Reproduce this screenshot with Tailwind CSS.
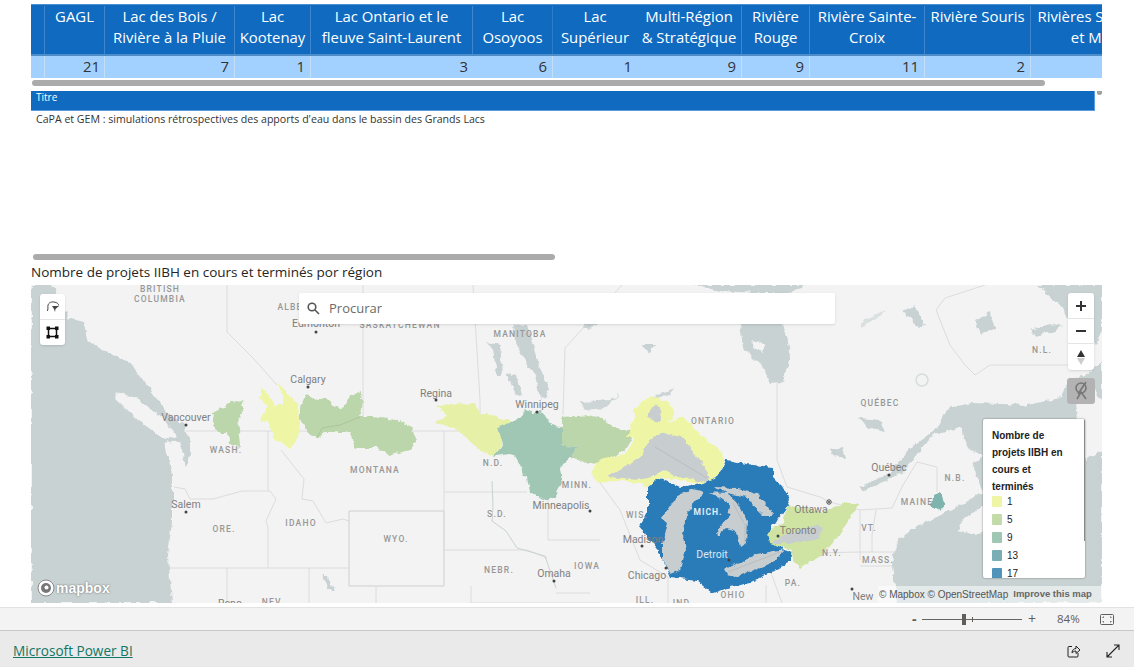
<!DOCTYPE html>
<html lang="fr">
<head>
<meta charset="UTF-8">
<title>Microsoft Power BI</title>
<script src="https://cdn.jsdelivr.net/npm/@tailwindcss/browser@4"></script>
</head>
<body class="bg-white h-[667px] w-[1134px] overflow-hidden flex flex-col font-['Open_Sans',sans-serif]">
  <div class="h-[607px] pl-[31px] pr-[32px] pt-[4px] flex flex-col">
    <!-- table -->
    <div class="w-[1071px] overflow-hidden text-[14.9px]">
      <div class="grid grid-cols-[14px_60px_130px_76px_162px_80px_84px_105px_68px_115px_106px_140px] h-[52px] bg-[#0f6ac0] text-white text-center leading-[21px] border-t border-[#4d8fd0] border-b-2 border-b-[#4f8dc8] pt-px whitespace-nowrap">
        <div class="border-r border-[#3f86cc]"></div>
        <div class="border-r border-[#3f86cc]">GAGL</div>
        <div class="border-r border-[#3f86cc]">Lac des Bois /<br>Rivière à la Pluie</div>
        <div class="border-r border-[#3f86cc]">Lac<br>Kootenay</div>
        <div class="border-r border-[#3f86cc]">Lac Ontario et le<br>fleuve Saint-Laurent</div>
        <div class="border-r border-[#2f7cc6]">Lac<br>Osoyoos</div>
        <div>Lac<br>Supérieur</div>
        <div class="border-r border-[#3f86cc]">Multi-Région<br>&amp; Stratégique</div>
        <div class="border-r border-[#3f86cc]">Rivière<br>Rouge</div>
        <div class="border-r border-[#3f86cc]">Rivière Sainte-<br>Croix</div>
        <div class="border-r border-[#3f86cc]">Rivière Souris</div>
        <div class="overflow-hidden">Rivières Saint-Jean<br>et Maine</div>
      </div>
      <div class="grid grid-cols-[14px_60px_130px_76px_162px_80px_84px_105px_68px_115px_106px_140px] h-[22px] bg-[#a3d1ff] text-[#333] text-right leading-[21px]">
        <div class="border-r border-[#c4dff5]"></div>
        <div class="border-r border-[#c4dff5] pr-[4px]">21</div>
        <div class="border-r border-[#c4dff5] pr-[5px]">7</div>
        <div class="border-r border-[#c4dff5] pr-[5px]">1</div>
        <div class="pr-[5px]">3</div>
        <div class="border-r border-[#c4dff5] pr-[5px]">6</div>
        <div class="pr-[5px]">1</div>
        <div class="border-r border-[#c4dff5] pr-[5px]">9</div>
        <div class="border-r border-[#c4dff5] pr-[5px]">9</div>
        <div class="border-r border-[#c4dff5] pr-[5px]">11</div>
        <div class="border-r border-[#c4dff5] pr-[5px]">2</div>
        <div></div>
      </div>
    </div>
    <div class="mt-[2px] ml-px w-[1013px] h-[6px] rounded-full bg-[#ababab]"></div>

    <!-- titre -->
    <div class="mt-[5px] flex items-start">
      <div class="w-[1064px] h-[20px] bg-[#0f6ac0] border-b border-r border-[#5b9be0] text-white text-[10px] leading-[13px] pl-[5px]">Titre</div>
      <div class="ml-[2px] w-[5px] h-[4px] rounded-b-full bg-[#a0a0a0]"></div>
    </div>
    <div class="pl-[5px] mt-[1px] text-[10.600px] leading-[14px] text-[#333] whitespace-nowrap">CaPA et GEM : simulations rétrospectives des apports d'eau dans le bassin des Grands Lacs</div>

    <div class="mt-[128px] ml-[2px] w-[522px] h-[6px] rounded-full bg-[#ababab]"></div>
    <div class="mt-[3px] h-[19px] text-[13.500px] leading-[18px] text-[#252423] whitespace-nowrap">Nombre de projets IIBH en cours et terminés por région</div>

    <!-- map -->
    <div class="relative mt-[3px] w-[1071px] h-[318px] overflow-hidden bg-[#f3f3f3]">
      <svg class="absolute inset-0" width="1071" height="318" viewBox="31 285 1071 318" font-family="Roboto, sans-serif">
        <defs>
          <filter id="rough" x="0" y="0" width="100%" height="100%">
            <feTurbulence type="fractalNoise" baseFrequency="0.14" numOctaves="3" seed="4"/>
            <feDisplacementMap in="SourceGraphic" scale="6" xChannelSelector="R" yChannelSelector="G"/>
            <feGaussianBlur stdDeviation="0.35"/>
          </filter>
          <filter id="soft"><feGaussianBlur stdDeviation="0.4"/></filter>
        </defs>
        <!-- water -->
        <g fill="#c9d2d3" filter="url(#rough)">
          <polygon points="31,285 50,285 62,300 68,318 84,322 87,340 105,352 130,362 150,390 167,412 183,425 186,440 165,443 172,474 172,521 168,555 172,603 31,603"/>
          <polygon points="1037,285 1102,285 1102,330 1095,345 1068,320 1060,305"/>
          <polygon points="860,488 890,472 910,448 937,428 947,408 973,403 1027,405 1060,398 1068,382 1085,375 1102,362 1102,603 897,603 892,565 893,555 900,538 920,525 947,512 983,492 973,465 983,455 970,450 960,427 933,435 903,472 862,492"/>
          <polygon points="693,285 806,285 790,293 760,293 720,291"/>
          <polygon points="740,323 783,323 790,357 783,382 770,383 763,368 743,348"/>
          <polygon points="513,323 527,325 540,368 548,385 547,400 540,398 535,375 527,365 515,342"/>
          <polygon points="487,342 500,345 503,375 497,375 493,350"/>
          <polygon points="505,372 517,375 522,395 515,392"/>
          <polygon points="183,425 190,437 190,455 186,468 183,455 180,440"/>
          <polygon points="903,312 915,306 925,325 918,328 910,318"/>
          <polygon points="975,320 990,312 995,330 980,335"/>
          <polygon points="1030,330 1050,324 1062,327 1048,333 1035,336"/>
          <polygon points="322,573 328,578 336,590 328,590"/>
          <polygon points="860,322 885,310 880,316 862,328" opacity="0.6"/>
          <polygon points="655,395 675,388 668,395 650,400" opacity="0.9"/>
          <polygon points="580,402 610,400 620,395 605,408 585,410" opacity="0.9"/>
          <polygon points="585,323 600,321 597,327 585,328"/>
          <polygon points="640,345 655,345 650,352"/>
          <polygon points="860,418 880,420 885,432 868,428"/>
          <polygon points="830,450 842,447 845,458 833,456"/>
        </g>
        <g fill="#f3f3f3" filter="url(#rough)">
          <polygon points="117,392 135,398 163,418 176,436 165,440 138,420 115,398"/>
          <polygon points="958,530 962,520 985,505 1000,490 1000,520 975,535"/>
          <polygon points="1075,405 1090,385 1102,400 1102,450 1085,460"/>
          <polygon points="753,340 765,345 762,352 752,347"/>
        </g>
        <circle cx="922" cy="380" r="6" fill="none" stroke="#d5dcdd" stroke-width="1.500" filter="url(#soft)"/>
        <!-- borders -->
        <g fill="none" stroke="#dcdcdc" stroke-width="1">
          <path d="M186,431 H600"/>
          <path d="M227,285 V332 L253,358 L277,385"/>
          <path d="M363,285 V431"/>
          <path d="M473,285 L480,400 V431"/>
          <path d="M622,285 L565,348 L563,415"/>
          <path d="M777,382 V460 L787,487 L820,497 L830,502 L860,510"/>
          <path d="M268,431 V491 M174,487 L185,489 L190,499 L213,499 L242,491 H270 L276,499 L266,521 L268,528 V568"/>
          <path d="M170,568 H349"/>
          <path d="M281,450 L304,479 L302,499 L313,501 L326,523 L343,519 L349,521"/>
          <path d="M349,511 H444 V586 H349 Z" stroke="#cfcfcf"/>
          <path d="M444,431 V550 L527,550 L547,558 M444,492 H527"/>
          <path d="M548,494 V540 H600 M376,586 V603 M471,586 V603 M227,568 V603 M309,568 V603 M471,603 H600 M556,593 H590"/>
          <path d="M600,448 L598,480 L620,510 L640,560 L668,577 V603"/>
          <path d="M860,510 L892,508 L903,485 L917,462 L937,467 V492"/>
          <path d="M860,510 V560 M876,510 L872,535 L872,552 M860,552 H895 M860,566 H892 M766,585 V603 M770,570 L782,603 M810,553 L860,552"/>
          <path d="M990,365 H1070 M990,365 L975,375 L965,365 L950,345 L940,320 L936,310 L945,298 L985,285"/>
        </g>
        <path d="M492,481 L493,507 L492,521 L506,531 L517,548 L545,556 L556,588" fill="none" stroke="#c9d2d3" stroke-width="1"/>
        <!-- regions -->
        <g filter="url(#rough)">
          <polygon fill="#bcd6ab" points="213,413 232,402 242,400 243,412 237,420 239,430 240,447 230,445 228,433 217,433 212,420"/>
          <polygon fill="#bcd6ab" points="300,407 305,395 318,400 325,397 333,405 342,410 350,395 363,391 360,417 372,417 397,420 412,427 416,440 410,450 392,455 377,448 355,448 350,432 327,432 317,438 308,433 300,420"/>
          <polygon fill="#eef6a6" points="262,388 268,393 275,405 283,405 278,383 288,393 297,403 300,423 298,437 290,448 282,442 275,440 268,423 260,420 267,407 260,398"/>
          <polygon fill="#e6f0a6" points="437,407 447,403 455,405 473,403 480,412 513,422 498,427 503,442 495,457 480,450 457,430 435,422 447,415"/>
          <polygon fill="#bcd6ab" points="562,417 590,415 605,420 620,430 637,430 625,450 600,465 578,460 570,458 578,448 562,445"/>
          <polygon fill="#9fc7b3" points="527,410 533,413 542,412 552,425 562,428 562,445 578,448 570,458 560,467 562,483 555,497 543,500 530,493 527,477 517,463 513,453 493,457 503,445 498,427 517,420"/>
          <polygon fill="#eef6a6" points="592,468 603,458 625,455 635,437 627,437 635,413 633,410 650,395 670,403 675,415 668,423 683,417 703,437 717,448 726,460 717,477 703,483 660,478 650,487 623,480 600,483 593,477"/>
          <polygon fill="#2b7bb9" points="727,460 737,462 753,465 773,467 773,477 783,487 790,500 783,513 770,530 783,550 793,552 790,562 770,573 750,583 730,587 713,593 697,580 670,577 660,553 640,527 648,510 648,487 660,478 680,487 703,483 717,477"/>
          <polygon fill="#cfe3a2" points="787,505 800,508 823,512 843,503 859,503 847,523 837,537 820,557 800,568 793,560 792,550 770,543 768,532 783,523"/>
          <polygon fill="#7fb3ad" points="933,495 940,492 945,505 940,511 932,507"/>
        </g>
        <path d="M317,438 L322,428 L340,425 L360,417" fill="none" stroke="#9fb891" stroke-width="0.6"/>
        <!-- great lakes -->
        <g fill="#c8ced0" filter="url(#rough)">
          <polygon points="607,477 623,468 642,455 647,443 660,432 670,435 683,437 693,452 708,473 710,480 703,482 693,478 677,477 663,470 652,477 637,480 623,478"/>
          <polygon points="650,410 655,403 660,408 661,420 655,423 648,417"/>
          <polygon points="662,518 677,495 693,490 705,493 695,502 688,512 683,527 686,550 680,570 670,574 663,560 663,543 668,523"/>
          <polygon points="708,492 727,493 737,502 748,520 747,543 740,548 737,532 727,528 718,536 717,530 728,517 730,505 720,498"/>
          <polygon points="715,487 737,488 757,493 773,515 763,515 752,505 747,497 727,493"/>
          <polygon points="724,570 733,565 757,555 785,550 773,562 753,570 737,577 727,575"/>
          <polygon points="773,543 783,535 818,525 823,528 818,537 797,543"/>
        </g>
        <path d="M655,447 L707,478 M733,503 L745,525 L745,545 M728,572 L780,552" fill="none" stroke="#a8adb0" stroke-width="0.5"/>
        <!-- cities -->
        <g fill="#444">
          <circle cx="186" cy="425" r="1.5"/><circle cx="308" cy="387" r="1.5"/><circle cx="316" cy="332" r="1.5"/>
          <circle cx="436" cy="400" r="1.5"/><circle cx="537" cy="412" r="1.5"/><circle cx="590" cy="511" r="1.5"/>
          <circle cx="186" cy="512" r="1.5"/><circle cx="642" cy="546" r="1.5"/><circle cx="666" cy="568" r="1.5"/>
          <circle cx="729" cy="560" r="1.5"/><circle cx="778" cy="536" r="1.5"/>
          <circle cx="852" cy="589" r="1.5"/><circle cx="554" cy="581" r="1.5"/><circle cx="889" cy="475" r="1.5"/>
        </g>
        <circle cx="829" cy="502" r="2.200" fill="#fff" stroke="#444"/><circle cx="829" cy="502" r="1" fill="#444"/>
        <!-- labels -->
        <g fill="#979797" font-size="8.500" font-weight="500" text-anchor="middle" letter-spacing="1.200">
          <text x="160" y="292">BRITISH</text>
          <text x="160" y="302">COLUMBIA</text>
          <text x="290" y="310">ALBE</text>
          <text x="400" y="328">SASKATCHEWAN</text>
          <text x="520" y="337">MANITOBA</text>
          <text x="375" y="473">MONTANA</text>
          <text x="226" y="453">WASH.</text>
          <text x="493" y="466">N.D.</text>
          <text x="577" y="488">MINN.</text>
          <text x="713" y="424">ONTARIO</text>
          <text x="880" y="406">QUÉBEC</text>
          <text x="637" y="518">WIS.</text>
          <text x="587" y="569">IOWA</text>
          <text x="224" y="532">ORE.</text>
          <text x="301" y="526">IDAHO</text>
          <text x="396" y="542">WYO.</text>
          <text x="497" y="517">S.D.</text>
          <text x="499" y="573">NEBR.</text>
          <text x="273" y="605">NEV.</text>
          <text x="793" y="586">PA.</text>
          <text x="733" y="598">OHIO</text>
          <text x="645" y="603">ILL.</text>
          <text x="683" y="606">IND.</text>
          <text x="832" y="556">N.Y.</text>
          <text x="869" y="531">VT.</text>
          <text x="878" y="563">MASS.</text>
          <text x="1042" y="353">N.L.</text>
          <text x="955" y="481">N.B.</text>
          <text x="917" y="505">MAINE</text>
        </g>
        <g fill="#7f7f7f" font-size="10.500" text-anchor="middle">
          <text x="186" y="421">Vancouver</text>
          <text x="308" y="383">Calgary</text>
          <text x="316" y="327">Edmonton</text>
          <text x="436" y="397">Regina</text>
          <text x="537" y="408">Winnipeg</text>
          <text x="561" y="509">Minneapolis</text>
          <text x="186" y="508">Salem</text>
          <text x="643" y="543">Madison</text>
          <text x="647" y="579">Chicago</text>
          <text x="554" y="577">Omaha</text>
          <text x="811" y="513">Ottawa</text>
          <text x="889" y="471">Québec</text>
          <text x="863" y="600">New</text>
          <text x="798" y="534">Toronto</text>
          <text x="230" y="607">Reno</text>
          <text x="712" y="558" fill="#dbe8f3">Detroit</text>
        </g>
        <text x="708" y="515" fill="#e2ecf5" font-size="8.500" font-weight="700" letter-spacing="1" text-anchor="middle">MICH.</text>
      </svg>

      <!-- draw tools -->
      <div class="absolute left-[9px] top-[9px] w-[25px] h-[51px] bg-white rounded-[3px] shadow-sm flex flex-col">
        <div class="h-[26px] border-b border-[#e5e5e5] flex items-center justify-center">
          <svg width="14" height="13" viewBox="0 0 14 13" fill="none" stroke="#444" stroke-width="1"><path d="M2 8 C1 3 5 1.500 8 2 C11 2.500 13 4 12.500 5.500"/><path d="M6 6 H13 L9.500 9 L9 12 L8 9 Z" fill="#444" stroke="none"/><path d="M2 8 L1.500 11"/></svg>
        </div>
        <div class="flex-1 flex items-center justify-center">
          <svg width="13" height="13" viewBox="0 0 13 13" fill="none" stroke="#111" stroke-width="1.5"><rect x="2.500" y="2.500" width="8" height="8"/><g fill="#111" stroke="none"><rect x="0.500" y="0.500" width="3.500" height="3.500"/><rect x="9" y="0.500" width="3.500" height="3.500"/><rect x="0.500" y="9" width="3.500" height="3.500"/><rect x="9" y="9" width="3.500" height="3.500"/></g></svg>
        </div>
      </div>

      <!-- search -->
      <div class="absolute left-[268px] top-[8px] w-[536px] h-[31px] bg-white rounded-[2px] shadow-sm flex items-center pl-[8px] gap-[9px] text-[13px] text-[#6b6b6b]">
        <svg width="13" height="13" viewBox="0 0 13 13" fill="none" stroke="#555" stroke-width="1.6"><circle cx="5" cy="5" r="3.800"/><path d="M8 8 L12 12"/></svg>
        <span>Procurar</span>
      </div>

      <!-- zoom controls -->
      <div class="absolute left-[1037px] top-[8px] w-[26px] h-[77px] bg-white rounded-[3px] shadow-sm flex flex-col items-center">
        <div class="h-[26px] w-full border-b border-[#e5e5e5] flex items-center justify-center">
          <svg width="12" height="12" viewBox="0 0 12 12" stroke="#333" stroke-width="2"><path d="M1 6 H11 M6 1 V11"/></svg>
        </div>
        <div class="h-[25px] w-full border-b border-[#e5e5e5] flex items-center justify-center">
          <svg width="10" height="4" viewBox="0 0 10 4" stroke="#333" stroke-width="2"><path d="M0 2 H10"/></svg>
        </div>
        <div class="flex-1 flex items-center justify-center">
          <svg width="8" height="15" viewBox="0 0 8 15"><polygon points="4,0 8,7 0,7" fill="#333"/><polygon points="4,15 8,8 0,8" fill="#ccc"/></svg>
        </div>
      </div>
      <div class="absolute left-[1036px] top-[93px] w-[28px] h-[26px] bg-[#b3b3b3] rounded-[3px] flex items-center justify-center">
        <svg width="18" height="20" viewBox="0 0 18 20" fill="none" stroke="#777" stroke-width="1.6"><circle cx="9" cy="7" r="5"/><path d="M5 18 L9 11 L14 18"/><path d="M14 1 L6 13"/></svg>
      </div>

      <!-- legend -->
      <div class="absolute left-[952px] top-[134px] w-[102px] h-[159px] bg-white rounded-[2px] shadow-[0_0_2px_rgba(0,0,0,0.5)] overflow-hidden font-['Liberation_Sans',sans-serif] pl-[9px] pt-[8px]">
        <div class="text-[10px] font-bold leading-[17px] text-[#222] whitespace-nowrap">Nombre de<br>projets IIBH en<br>cours et<br>terminés</div>
        <div class="flex flex-col gap-[7px] mt-[1px] text-[10px] leading-[11px] text-[#222]">
          <div class="flex items-center gap-[5px]"><span class="w-[10px] h-[11px] rounded-[1px] bg-[#eef6a6]"></span>1</div>
          <div class="flex items-center gap-[5px]"><span class="w-[10px] h-[11px] rounded-[1px] bg-[#c3dba9]"></span>5</div>
          <div class="flex items-center gap-[5px]"><span class="w-[10px] h-[11px] rounded-[1px] bg-[#9fc7b3]"></span>9</div>
          <div class="flex items-center gap-[5px]"><span class="w-[10px] h-[11px] rounded-[1px] bg-[#79aeb6]"></span>13</div>
          <div class="flex items-center gap-[5px]"><span class="w-[10px] h-[11px] rounded-[1px] bg-[#5094b9]"></span>17</div>
        </div>
        <span class="absolute right-0 top-0 w-[1px] h-[122px] bg-[#888]"></span>
      </div>

      <!-- attribution -->
      <div class="absolute right-0 bottom-0 w-[224px] h-[17px] bg-white/50 flex items-center pl-[1px] gap-[5px] text-[10px] text-[#555] font-['Liberation_Sans',sans-serif] whitespace-nowrap">
        <span>© Mapbox © OpenStreetMap</span><span class="font-bold text-[#666] text-[9.500px]">Improve this map</span>
      </div>
      <div class="absolute left-[6px] bottom-[6px] flex items-center gap-[1px] text-white font-['Liberation_Sans',sans-serif] font-bold text-[14px] leading-none [text-shadow:0_0_2px_#555]">
        <svg width="18" height="18" viewBox="0 0 18 18"><circle cx="9" cy="9" r="8" fill="#fff" stroke="#888"/><circle cx="9" cy="9" r="5" fill="#777"/><circle cx="9.500" cy="8.500" r="2" fill="#fff"/></svg>
        <span>mapbox</span>
      </div>
    </div>
  </div>

  <!-- zoom bar -->
  <div class="h-[24px] bg-[#f3f3f3] border-t border-[#e2e2e2] border-b border-b-[#c8c8c8] flex items-center text-[#605e5c]">
    <span class="ml-[912px] w-[7px] text-[14px] font-bold leading-none">-</span>
    <div class="relative ml-[3px] w-[100px] h-[1px] bg-[#666]">
      <span class="absolute left-[40px] top-[-5px] w-[4px] h-[11px] bg-[#605e5c]"></span>
      <span class="absolute left-[50px] top-[-2px] w-px h-[5px] bg-[#605e5c]"></span>
    </div>
    <span class="ml-[6px] text-[14px] leading-none">+</span>
    <span class="ml-[21px] text-[11.500px] w-[28px]">84%</span>
    <svg class="ml-[15px]" width="14" height="11" viewBox="0 0 14 11" fill="none" stroke="#605e5c"><rect x="0.500" y="0.500" width="13" height="10" rx="1"/><path d="M3 4 V3 H4 M10 3 H11 V4 M3 7 V8 H4 M10 8 H11 V7"/></svg>
  </div>

  <!-- footer -->
  <div class="flex-1 bg-[#eaeaea] flex items-center pl-[13px] pr-[14px] pt-[4px]">
    <a class="text-[13.600px] text-[#117865] underline" href="#">Microsoft Power BI</a>
    <svg class="ml-auto" width="14" height="14" viewBox="0 0 14 14" fill="none" stroke="#222" stroke-width="1"><path d="M5 2.500 H2 Q1 2.500 1 3.500 V12 Q1 13 2 13 H10 Q11 13 11 12 V9"/><path d="M5 9 C5 6 7 4.500 9 4.500 V2 L13 6 L9 9.500 V7 C7 7 6 8 5 9 Z"/></svg>
    <svg class="ml-[25px]" width="14" height="14" viewBox="0 0 14 14" fill="none" stroke="#222" stroke-width="1.100"><path d="M1 13 L13 1 M8 1 H13 V6 M1 8 V13 H6"/></svg>
  </div>
</body>
</html>
